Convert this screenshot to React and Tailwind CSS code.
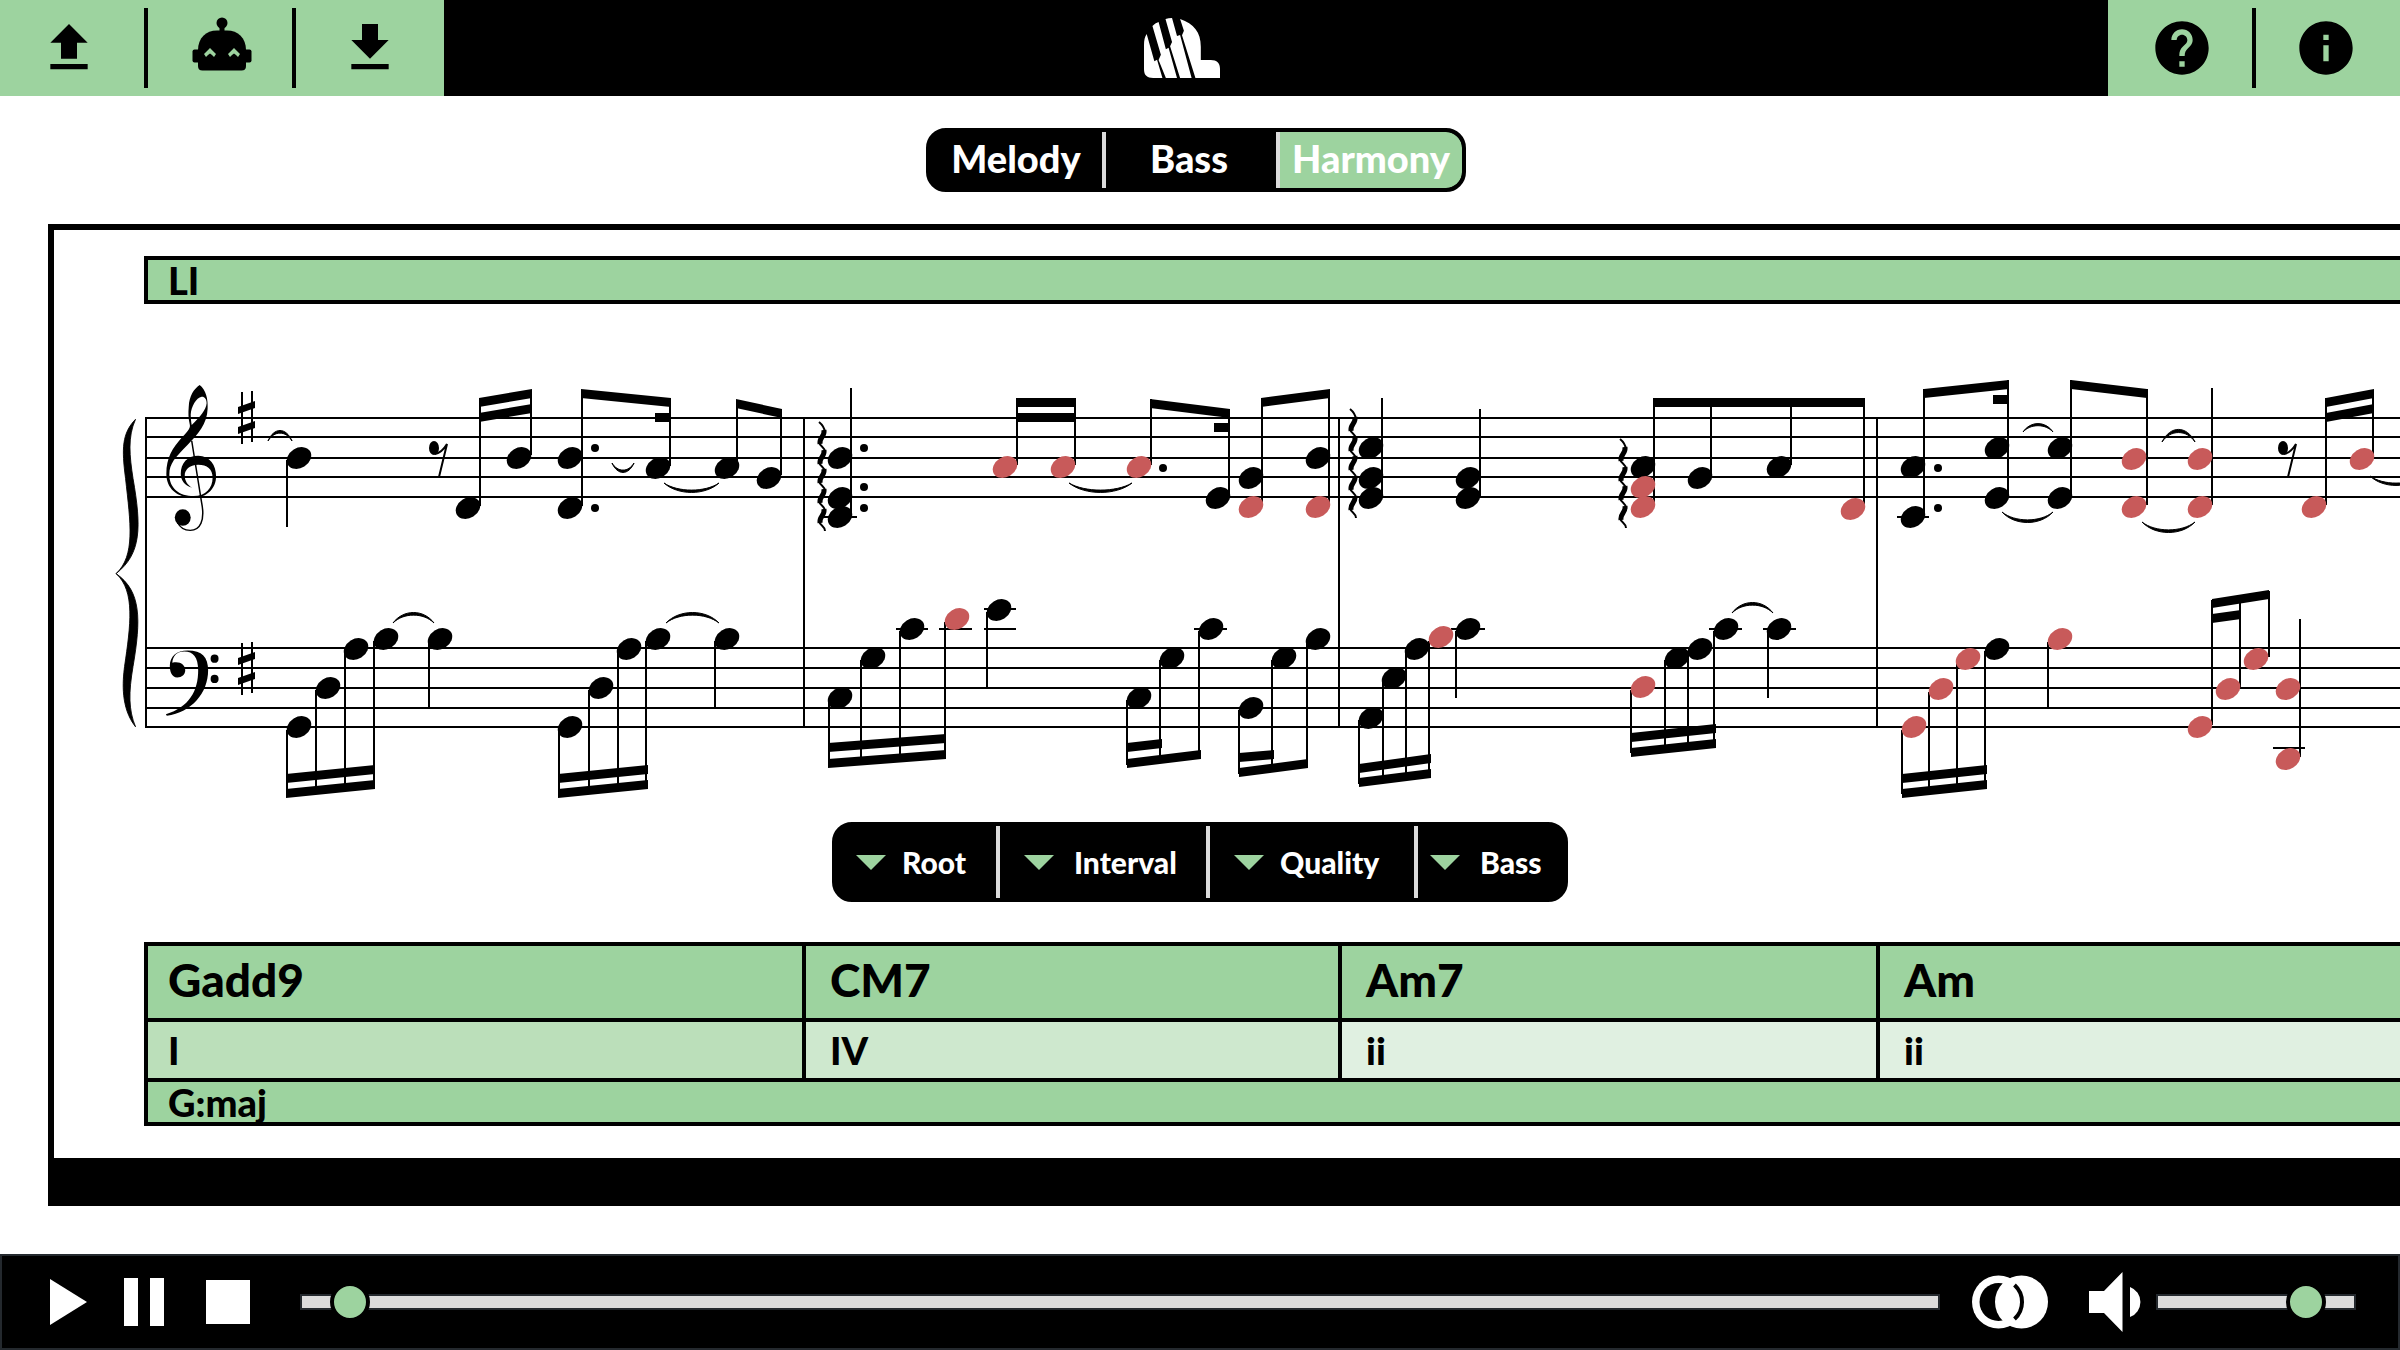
import React from "react";
import { MdHelp, MdInfo } from "react-icons/md";

const RED = "#c85a5a";

/* ---------- Score data: all coordinates are in score space ---------- */

const STAFF_LINES = [418, 437, 458, 477, 497, 648, 668, 688, 708, 727];
const BAR_LINES = [146, 804, 1339, 1877];

// [x, y, highlighted]
const NOTES = [
  [299, 458], [468, 508], [519, 458], [570, 458], [570, 508], [658, 468], [727, 468], [769, 478],
  [299, 727], [328, 688], [356, 649], [386, 639], [440, 639],
  [570, 727], [601, 688], [629, 649], [658, 639], [727, 639],
  [840, 458], [840, 498], [840, 517], [1005, 467, 1], [1063, 467, 1], [1139, 467, 1],
  [1218, 498], [1251, 478], [1251, 507, 1], [1318, 458], [1318, 507, 1],
  [840, 698], [873, 658], [912, 629], [957, 619, 1], [999, 610],
  [1139, 698], [1172, 658], [1211, 629], [1251, 708], [1284, 658], [1318, 639],
  [1371, 448], [1371, 478], [1371, 498], [1468, 478], [1468, 498],
  [1643, 467], [1643, 487, 1], [1643, 507, 1], [1700, 478], [1779, 467], [1853, 509, 1],
  [1371, 718], [1394, 678], [1417, 649], [1441, 637, 1], [1468, 629],
  [1643, 687, 1], [1677, 658], [1700, 649], [1726, 629], [1779, 629],
  [1913, 467], [1913, 517], [1997, 448], [1997, 498], [2060, 448], [2060, 498],
  [2134, 459, 1], [2134, 507, 1], [2200, 459, 1], [2200, 507, 1], [2314, 507, 1], [2362, 459, 1],
  [1914, 727, 1], [1941, 689, 1], [1968, 659, 1], [1997, 649], [2060, 639, 1],
  [2200, 727, 1], [2228, 689, 1], [2256, 659, 1], [2288, 689, 1], [2288, 759, 1],
];

// [x, top, bottom]
const STEMS = [
  [287, 460, 527], [480, 398, 506], [531, 390, 455], [582, 390, 506], [670, 398, 466], [737, 400, 465], [781, 409, 475],
  [287, 730, 794], [316, 690, 790], [345, 651, 788], [374, 641, 784], [429, 641, 707],
  [559, 730, 794], [589, 690, 790], [618, 651, 788], [646, 641, 784], [715, 641, 707],
  [851, 388, 516], [1017, 398, 465], [1075, 398, 465], [1151, 399, 465], [1229, 409, 496], [1262, 398, 505], [1329, 390, 505],
  [829, 700, 765], [861, 660, 760], [900, 631, 757], [945, 622, 754], [987, 612, 687],
  [1127, 700, 765], [1160, 660, 758], [1199, 631, 754], [1239, 710, 774], [1272, 660, 768], [1307, 641, 763],
  [1382, 398, 496], [1480, 409, 496], [1654, 398, 505], [1711, 400, 475], [1791, 400, 465], [1864, 398, 506],
  [1359, 720, 784], [1383, 680, 780], [1406, 651, 778], [1429, 641, 774], [1456, 631, 698],
  [1631, 690, 753], [1665, 660, 750], [1688, 651, 748], [1714, 631, 744], [1768, 631, 698],
  [1924, 389, 516], [2008, 380, 496], [2071, 380, 496], [2147, 389, 505], [2212, 388, 505], [2326, 398, 505], [2373, 390, 457],
  [1902, 730, 794], [1929, 692, 790], [1957, 662, 787], [1985, 651, 784], [2048, 642, 707],
  [2212, 600, 725], [2240, 597, 687], [2269, 591, 657], [2300, 619, 757],
];

// [x1, y1, x2, y2] of the upper edge
const BEAMS = [
  [479, 398, 532, 389], [479, 413, 532, 404], [581, 389, 671, 398], [655, 413, 671, 413], [736, 399, 782, 409],
  [286, 774, 375, 765], [286, 789, 375, 780], [558, 774, 648, 765], [558, 789, 648, 780],
  [1016, 398, 1076, 398], [1016, 413, 1076, 413], [1150, 399, 1230, 409], [1214, 423, 1230, 423], [1261, 398, 1330, 389],
  [828, 743, 946, 734], [828, 759, 946, 750], [1127, 743, 1162, 739], [1127, 759, 1201, 750], [1239, 753, 1274, 750], [1239, 768, 1308, 759],
  [1653, 398, 1865, 398], [1359, 764, 1431, 754], [1359, 778, 1431, 769], [1631, 733, 1716, 724], [1631, 748, 1716, 739],
  [1924, 389, 2009, 380], [1993, 395, 2009, 395], [2071, 380, 2147, 389], [2326, 398, 2374, 389], [2326, 413, 2374, 404],
  [1902, 774, 1987, 765], [1902, 789, 1987, 780], [2212, 599, 2269, 590], [2212, 614, 2241, 610],
];

const LEDGERS = [
  [822, 857, 517], [896, 928, 629], [939, 972, 629], [984, 1016, 609], [984, 1016, 629], [1194, 1227, 629],
  [1451, 1485, 629], [1709, 1742, 629], [1763, 1796, 629], [1897, 1929, 517], [2273, 2305, 748],
];

const DOTS = [
  [595, 448], [595, 508], [864, 448], [864, 487], [864, 508], [1163, 468], [1938, 468], [1938, 508],
];

// [x1, x2, y, depth]; a negative depth arches upwards
const TIES = [
  [268, 292, 441, -10], [612, 634, 463, 9], [664, 719, 483, 9], [393, 434, 623, -10], [666, 719, 623, -10],
  [1069, 1132, 483, 9], [1732, 1773, 613, -10], [2023, 2053, 432, -8], [2002, 2053, 512, 10],
  [2162, 2195, 442, -12], [2142, 2195, 522, 10], [2370, 2422, 476, 9],
];

// [x, first wave, waves]
const ARPEGGIOS = [[822, 437, 5], [1353, 424, 5], [1623, 454, 4]];

function Beam({ b: [x1, y1, x2, y2] }) {
  return <polygon points={`${x1},${y1} ${x2},${y2} ${x2},${y2 + 9} ${x1},${y1 + 9}`} />;
}

function Tie({ t: [x1, x2, y, d] }) {
  const w = (x2 - x1) / 4;
  const outer = y + d * 1.4;
  const inner = y + d * 1.05;
  return (
    <path
      d={`M${x1} ${y} C${x1 + w} ${outer} ${x2 - w} ${outer} ${x2} ${y} C${x2 - w} ${inner} ${x1 + w} ${inner} ${x1} ${y}Z`}
      stroke="#000"
      strokeWidth="1"
    />
  );
}

function Sharp({ y }) {
  return (
    <g transform={`translate(238 ${y})`}>
      <path d="M4 1V53M14 0V51" stroke="#000" strokeWidth="2" />
      <path d="M0 16L17 10V17L0 23ZM0 36L17 30V37L0 43Z" />
    </g>
  );
}

function EighthRest({ x, y }) {
  return (
    <g transform={`translate(${x} ${y})`}>
      <ellipse rx="5" ry="7" />
      <path d="M1 6C7 5 10 1 13 -4L5 29" fill="none" stroke="#000" strokeWidth="2" />
    </g>
  );
}

function Arpeggio({ a: [x, y, count] }) {
  const waves = Array.from({ length: count }, (_, i) => y + Math.round(i * 19.7));
  return (
    <g fill="none" stroke="#000">
      <path d={`M${x - 3} ${y - 15}Q${x + 2} ${y - 11} ${x + 3} ${y - 5}`} strokeWidth="2" />
      {waves.map((c) => (
        <g key={c}>
          <path d={`M${x + 2} ${c - 7}C${x + 3} ${c} ${x - 3} ${c} ${x - 2} ${c + 7}`} strokeWidth="5" />
          <path d={`M${x - 3} ${c + 5}C${x - 2} ${c + 10} ${x + 3} ${c + 10} ${x + 3} ${c + 15}`} strokeWidth="2" />
        </g>
      ))}
    </g>
  );
}

function Clefs() {
  return (
    <g transform="translate(40 215) scale(.4974 .3763)">
      <path d="M192 543C176 590 180 640 187 700C204 830 204 900 153 953C204 1000 203 1075 187 1200C178 1270 178 1315 192 1360C162 1310 166 1240 170 1200C182 1090 192 1000 153 953C192 905 182 820 172 700C164 620 165 580 192 543Z" stroke="#000" strokeWidth="2" />
      <path
        fillRule="evenodd"
        d="M321 452C334 465 338 490 337 515C336 555 318 582 296 612C272 645 260 660 260 690C260 725 280 747 309 747C333 747 347 725 347 698C347 676 336 664 318 664C300 664 291 678 291 692C291 706 296 716 306 725C290 718 283 704 283 688C283 660 296 640 318 640C342 640 354 666 354 694C354 726 336 751 309 751C274 751 254 725 254 688C254 645 266 620 286 590C298 574 303 566 301 556C298 540 298 525 299 510C300 480 310 462 321 452ZM325 483C314 485 304 510 303 530C303 540 304 550 305 558C322 535 334 518 335 500C335 488 330 482 325 483Z"
      />
      <path d="M305 600L325 765C332 812 322 838 302 838C290 838 282 832 277 818" fill="none" stroke="#000" strokeWidth="3" />
      <ellipse cx="287" cy="804" rx="16" ry="22" />
      <path d="M253 1327C300 1308 318 1265 318 1210C318 1175 308 1160 290 1160C275 1160 267 1172 266 1190C281 1185 292 1195 292 1210C292 1222 285 1229 276 1229C264 1229 261 1212 261 1198C261 1172 275 1157 297 1157C326 1157 338 1175 338 1210C338 1270 305 1322 255 1331Z" />
      <ellipse cx="351" cy="1179" rx="8" ry="11" />
      <ellipse cx="351" cy="1233" rx="8" ry="11" />
    </g>
  );
}

function Score() {
  return (
    <svg
      role="img"
      aria-label="Piano score"
      viewBox="54 304 2346 518"
      className="block h-[518px] w-[2346px] max-w-none"
    >
      <g stroke="#000" strokeWidth="2">
        {STAFF_LINES.map((y) => (
          <line key={y} x1="146" x2="2400" y1={y} y2={y} />
        ))}
        {BAR_LINES.map((x) => (
          <line key={x} x1={x} x2={x} y1="417" y2="728" />
        ))}
        {STEMS.map(([x, a, b], i) => (
          <line key={i} x1={x} x2={x} y1={a} y2={b} />
        ))}
        {LEDGERS.map(([a, b, y], i) => (
          <line key={i} x1={a} x2={b} y1={y} y2={y} />
        ))}
      </g>
      <Clefs />
      <Sharp y={391} />
      <Sharp y={642} />
      {BEAMS.map((b, i) => (
        <Beam key={i} b={b} />
      ))}
      {TIES.map((t, i) => (
        <Tie key={i} t={t} />
      ))}
      {DOTS.map(([x, y], i) => (
        <circle key={i} cx={x} cy={y} r="4" />
      ))}
      {ARPEGGIOS.map((a, i) => (
        <Arpeggio key={i} a={a} />
      ))}
      <EighthRest x={434} y={448} />
      <EighthRest x={2283} y={448} />
      {NOTES.map(([x, y, hot], i) => (
        <ellipse
          key={i}
          rx="13"
          ry="10"
          fill={hot ? RED : "#000"}
          transform={`translate(${x} ${y}) rotate(-32)`}
        />
      ))}
    </svg>
  );
}

/* ---------- Icons ---------- */

function UploadIcon() {
  return (
    <svg viewBox="0 0 24 24" className="size-16" aria-hidden="true">
      <path d="M5 20h14v-2H5v2zM5 10h4v6h6v-6h4l-7-7-7 7z" />
    </svg>
  );
}

function DownloadIcon() {
  return (
    <svg viewBox="0 0 24 24" className="size-16" aria-hidden="true">
      <path d="M5 20h14v-2H5v2zM19 9h-4V3H9v6H5l7 7 7-7z" />
    </svg>
  );
}

function RobotIcon() {
  return (
    <svg viewBox="190 16 64 64" className="size-16" aria-hidden="true">
      <circle cx="222" cy="23" r="5.5" />
      <path d="M219.500 26h5v6h-5z" />
      <path d="M198 50C198 38 206 30.500 217 30.500H227C238 30.500 246 38 246 50V66Q246 70.500 241.500 70.500H202.500Q198 70.500 198 66Z" />
      <rect x="192.500" y="49.500" width="59" height="13" rx="2" />
      <path
        fill="#9dd39f"
        d="M204 54L210 48L216 54L214 57L212 55L210 53.500L208 55L206 57ZM228 54L234 48L240 54L238 57L236 55L234 53.500L232 55L230 57Z"
      />
    </svg>
  );
}

function Logo() {
  return (
    <svg viewBox="638 54 198 180" preserveAspectRatio="none" className="h-15 w-19" role="img" aria-label="Logo" fill="#fff">
      <path d="M638 136C638 120 640 110 645 102L665 184L672 179L686 234H662C646 234 638 226 638 208Z" />
      <path d="M660 78Q667 69 676 66L695 148L702 143L724 234H695L676 180L682 164Z" />
      <path d="M694 57Q702 54 711 54L724 108L732 105L762 234H732L706 139L711 126Z" />
      <path d="M732 57C768 72 786 96 786 140V180H812C828 180 836 190 836 206V234H772L737 106L742 92Z" />
    </svg>
  );
}

function BlendIcon() {
  return (
    <svg viewBox="1972 1275 76 54" className="h-[54px] w-[76px]" aria-hidden="true">
      <circle cx="1998.500" cy="1302" r="26.500" fill="#fff" />
      <circle cx="1998.500" cy="1302" r="19" fill="#000" />
      <circle cx="2021.500" cy="1302" r="26.500" fill="#fff" />
      <path d="M2014.500 1285A23 23 0 0 1 2014.500 1319" fill="none" stroke="#000" strokeWidth="4" />
    </svg>
  );
}

function VolumeIcon() {
  return (
    <svg viewBox="2089 1271 52 60" className="h-15 w-13" fill="#fff" aria-hidden="true">
      <path d="M2089 1290H2104L2122.500 1271V1331L2104 1312H2089ZM2130 1286A16 16 0 0 1 2130 1316Z" />
    </svg>
  );
}

/* ---------- Controls ---------- */

function Divider() {
  return <span className="w-1 self-stretch bg-black" />;
}

function IconButton({ label, className = "", children }) {
  return (
    <button type="button" aria-label={label} className={`flex w-36 items-center justify-center ${className}`}>
      {children}
    </button>
  );
}

function Tab({ className = "", active, children }) {
  return (
    <button
      type="button"
      role="tab"
      aria-selected={!!active}
      className={`flex items-center justify-center pb-1 leading-none ${className}`}
    >
      {children}
    </button>
  );
}

function Filter({ name, className = "" }) {
  return (
    <label className={`flex items-center ${className}`}>
      <svg viewBox="0 0 30 15" className="h-[15px] w-[30px] shrink-0" fill="#9dd39f" aria-hidden="true">
        <path d="M0 0H30L15 15Z" />
      </svg>
      <select aria-label={name} className="appearance-none bg-transparent leading-normal text-white outline-none">
        <option>{name}</option>
      </select>
    </label>
  );
}

const RANGE =
  "m-0 block h-10 min-w-0 cursor-pointer appearance-none bg-transparent " +
  "[&::-webkit-slider-runnable-track]:h-4 [&::-webkit-slider-runnable-track]:border-2 " +
  "[&::-webkit-slider-runnable-track]:border-[#24292e] [&::-webkit-slider-runnable-track]:bg-[#dcdcdc] " +
  "[&::-webkit-slider-thumb]:-mt-[14px] [&::-webkit-slider-thumb]:size-10 " +
  "[&::-webkit-slider-thumb]:appearance-none [&::-webkit-slider-thumb]:rounded-full " +
  "[&::-webkit-slider-thumb]:border-4 [&::-webkit-slider-thumb]:border-black " +
  "[&::-webkit-slider-thumb]:bg-[#9dd39f]";

const MEASURES = [
  { chord: "Gadd9", degree: "I", tint: "bg-[#bbdfba]", inset: "pl-5" },
  { chord: "CM7", degree: "IV", tint: "bg-[#cee8ce]", inset: "pl-6" },
  { chord: "Am7", degree: "ii", tint: "bg-[#e0f0e1]", inset: "pl-6" },
  { chord: "Am", degree: "ii", tint: "bg-[#e0f0e1]", inset: "pl-6" },
];

export default function App() {
  return (
    <div className="flex min-h-screen flex-col overflow-x-hidden bg-white font-['Lato_Black','Lato','Open_Sans',sans-serif] font-black text-black">
      <header className="flex h-24 justify-between bg-black">
        <nav className="flex flex-1">
          <div className="flex bg-[#9dd39f] py-2">
            <IconButton label="Upload" className="pr-1.5">
              <UploadIcon />
            </IconButton>
            <Divider />
            <IconButton label="Analyse" className="pl-1">
              <RobotIcon />
            </IconButton>
            <Divider />
            <IconButton label="Download" className="w-37">
              <DownloadIcon />
            </IconButton>
          </div>
        </nav>
        <div className="flex items-center pr-9">
          <Logo />
        </div>
        <nav className="flex flex-1 justify-end">
          <div className="flex bg-[#9dd39f] py-2">
            <IconButton label="Help" className="pl-1">
              <MdHelp className="size-16" />
            </IconButton>
            <Divider />
            <IconButton label="About" className="pr-1">
              <MdInfo className="size-16" />
            </IconButton>
          </div>
        </nav>
      </header>

      <div className="mt-8 flex justify-center pr-2">
        <div
          role="tablist"
          className="flex h-16 overflow-hidden rounded-[20px] border-4 border-black bg-black text-[38px] text-white"
        >
          <Tab className="w-[172px]">Melody</Tab>
          <span className="w-1 bg-[#dcdcdc]" />
          <Tab className="w-[170px] pr-1">Bass</Tab>
          <span className="w-1 bg-[#dcdcdc]" />
          <Tab active className="w-[182px] rounded-r-2xl bg-[#9dd39f]">
            Harmony
          </Tab>
        </div>
      </div>

      <main className="mt-8 ml-12 overflow-hidden border-t-6 border-l-6 border-black pt-[26px]">
        <div className="ml-[90px] flex h-12 items-center border-y-4 border-l-4 border-black bg-[#9dd39f] pl-5 text-[38px] leading-none">
          LI
        </div>

        <Score />

        <div className="flex justify-center pr-[54px]">
          <div className="flex h-20 rounded-[20px] border-4 border-black bg-black text-[30px]">
            <Filter name="Root" className="w-40 gap-4 pl-5" />
            <span className="w-1 bg-[#dcdcdc]" />
            <Filter name="Interval" className="w-[206px] gap-5 pl-6" />
            <span className="w-1 bg-[#dcdcdc]" />
            <Filter name="Quality" className="w-[204px] gap-4 pl-6" />
            <span className="w-1 bg-[#dcdcdc]" />
            <Filter name="Bass" className="w-[146px] gap-5 pl-3" />
          </div>
        </div>

        <div className="mt-10 pl-[90px]">
          <table className="w-full table-fixed border-separate border-spacing-0 text-left leading-none">
            <colgroup>
              <col className="w-[658px]" />
              <col className="w-[536px]" />
              <col className="w-[538px]" />
              <col />
            </colgroup>
            <tbody>
              <tr className="h-[76px] bg-[#9dd39f] text-[46px]">
                {MEASURES.map((m, i) => (
                  <td key={i} className={`border-t-4 border-l-4 border-black p-0 pb-1 ${m.inset}`}>
                    {m.chord}
                  </td>
                ))}
              </tr>
              <tr className="h-15 text-[38px]">
                {MEASURES.map((m, i) => (
                  <td key={i} className={`border-t-4 border-l-4 border-black p-0 ${m.inset} ${m.tint}`}>
                    {m.degree}
                  </td>
                ))}
              </tr>
              <tr className="h-12 bg-[#9dd39f] text-[38px]">
                <td colSpan={4} className="border-y-4 border-l-4 border-black p-0 pl-5">
                  G:maj
                </td>
              </tr>
            </tbody>
          </table>
        </div>

        <div className="mt-8 h-12 bg-black" />
      </main>

      <footer className="mt-12 flex h-24 items-center border-2 border-[#24292e] bg-black pr-[42px] pl-12">
        <button type="button" aria-label="Play">
          <svg viewBox="0 0 37 48" className="h-12 w-[37px]" fill="#fff">
            <path d="M0 1V47L37 24Z" />
          </svg>
        </button>
        <button type="button" aria-label="Pause" className="ml-[37px] flex h-12 w-10 justify-between">
          <span className="h-full w-[14px] bg-white" />
          <span className="h-full w-[14px] bg-white" />
        </button>
        <button type="button" aria-label="Stop" className="ml-[42px] size-11 bg-white" />
        <input
          type="range"
          aria-label="Position"
          min="0"
          max="100"
          step="any"
          defaultValue="1.75"
          className={`ml-[50px] flex-1 ${RANGE}`}
        />
        <button type="button" aria-label="Blend" className="ml-8">
          <BlendIcon />
        </button>
        <button type="button" aria-label="Mute" className="ml-[41px]">
          <VolumeIcon />
        </button>
        <input
          type="range"
          aria-label="Volume"
          min="0"
          max="100"
          step="any"
          defaultValue="82"
          className={`ml-[15px] w-[200px] ${RANGE}`}
        />
      </footer>
    </div>
  );
}
